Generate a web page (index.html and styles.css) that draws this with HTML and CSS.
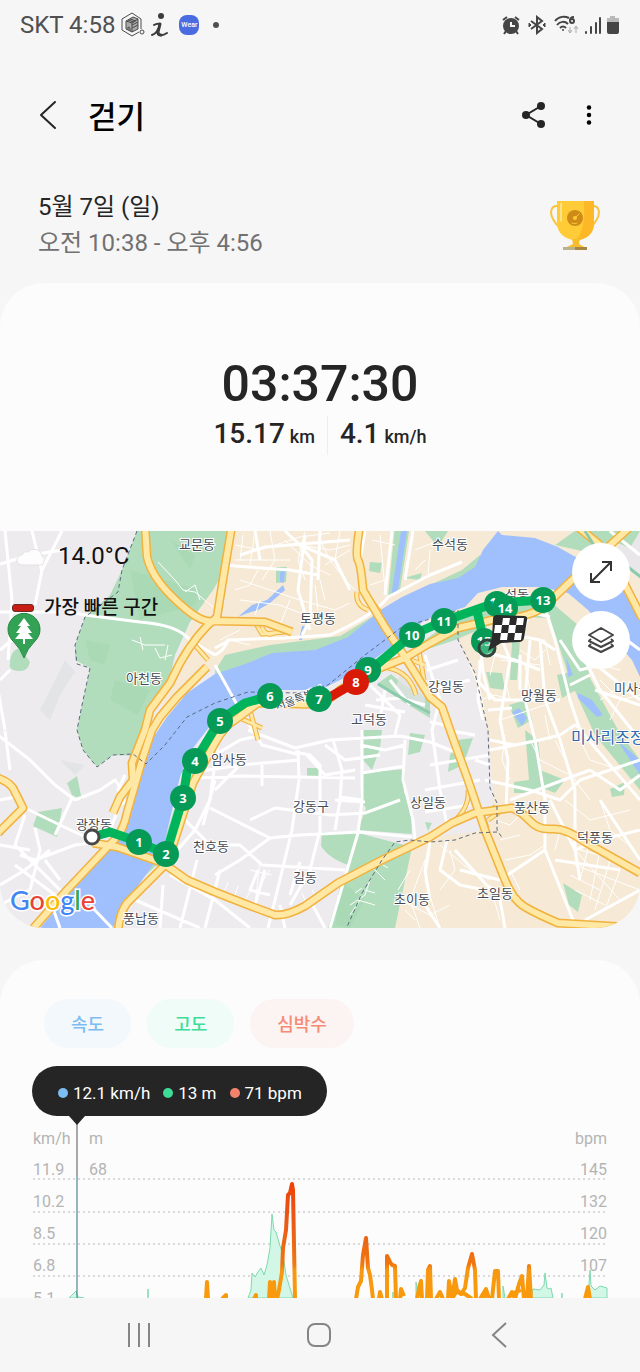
FILE: index.html
```html
<!DOCTYPE html>
<html lang="ko">
<head>
  <meta charset="UTF-8">
  <meta name="viewport" content="width=device-width, initial-scale=1">
  <title>걷기</title>
  <link rel="stylesheet" href="styles.css">
</head>
<body>
  <div class="status-bar">
    <div class="status-left">
      <span class="carrier">SKT 4:58</span>
      <svg width="24" height="26" viewBox="0 0 24 26" fill="none" stroke="#4a4a4a" stroke-width="1">
        <path d="M20 17V7L11 1 1 7v11l10 6 7-4"/>
        <path d="M5 9l7-4 5 2v10l-6 3-6-3z" fill="#aaa"/>
        <path d="M5 9l6 2v9M11 11l6-4M7 8l6 2M9 7l6 2M11 13l6-3M11 16l6-3M7 18v-3l2 1v3"/>
        <circle cx="21" cy="20" r="2"/>
      </svg>
      <svg width="18" height="26" viewBox="0 0 18 26" fill="none" stroke="#3c3c3c" stroke-linecap="round" stroke-linejoin="round">
        <path d="M3 13q3-2 6-1L7 19c-1 4 3 6 9 2M7 17c-1 3-3 5-6 6" stroke-width="2"/>
        <path d="M9 12L7 20q0 3 3 3" stroke-width="3"/>
        <circle cx="10" cy="4" r="3" fill="#3c3c3c" stroke="none"/>
      </svg>
      <span class="wear">Wear</span>
      <span class="dot"></span>
    </div>
    <div class="status-right">
      <svg width="18" height="20" viewBox="0 0 18 20">
        <circle cx="9" cy="11" r="8" fill="#454545"/>
        <path d="M1 5l4-3M17 5l-4-3M4 16l-2 3M14 16l2 3" stroke="#454545" stroke-width="2"/>
        <path d="M9 7v4h4" stroke="#f6f6f6" stroke-width="2" fill="none"/>
      </svg>
      <svg width="18" height="20" viewBox="0 0 18 20" fill="none" stroke="#454545" stroke-width="2">
        <path d="M3 6l11 8-5 4V2l5 4-11 8"/>
        <path d="M1 8l2 2-2 2zM17 8l-2 2 2 2z" fill="#454545" stroke-width="1"/>
      </svg>
      <svg width="26" height="20" viewBox="0 0 26 20" fill="none" stroke="#454545" stroke-width="2">
        <path d="M1 6c4-5 10-5 14-3M3 10c3-4 8-4 11-1M6 13c2-2 4-2 6 0"/>
        <circle cx="9" cy="15" r="1" fill="#454545" stroke="none"/>
        <path d="M20 2c-3 0-4 2-4 4"/><circle cx="18" cy="6" r="2"/>
        <path d="M16 12v6M14 15l2 3 2-3M22 18v-6M20 14l2-3 2 3" stroke="#aaa" stroke-width="1"/>
      </svg>
      <svg width="18" height="20" viewBox="0 0 18 20" fill="none" stroke="#454545" stroke-width="2" stroke-linecap="round">
        <path d="M2 17v1M7 12v6M12 8v10M16 3v15"/>
      </svg>
      <svg width="14" height="20" viewBox="0 0 14 20">
        <path d="M4 1h5v2h4v5H1V3h3z" fill="#b9b9b9"/>
        <path d="M1 7h12v10q0 2-2 2H3q-2 0-2-2z" fill="#454545"/>
      </svg>
    </div>
  </div>

  <header class="app-bar">
    <button class="icon-btn" aria-label="뒤로">
      <svg width="18" height="30" viewBox="0 0 18 30" fill="none" stroke="#252525" stroke-width="2" stroke-linecap="round" stroke-linejoin="round"><path d="M16 2L2 15l14 13"/></svg>
    </button>
    <h1>걷기</h1>
    <button class="icon-btn share" aria-label="공유">
      <svg width="24" height="28" viewBox="0 0 24 28" fill="#252525"><path d="M19 5L4 14l15 9" fill="none" stroke="#252525" stroke-width="2"/><circle cx="19" cy="5" r="4"/><circle cx="4" cy="14" r="4"/><circle cx="19" cy="23" r="4"/></svg>
    </button>
    <button class="icon-btn" aria-label="더보기">
      <svg width="6" height="26" viewBox="0 0 8 30"><circle cx="4" cy="5" r="3"/><circle cx="4" cy="15" r="3"/><circle cx="4" cy="25" r="3"/></svg>
    </button>
  </header>

  <section class="session">
    <div>
      <p class="date">5월 7일 (일)</p>
      <p class="period">오전 10:38 - 오후 4:56</p>
    </div>
    <svg width="50" height="52" viewBox="0 0 50 52">
      <path d="M8 7C0 6 0 15 3 20s5 9 10 8M42 7c8-1 8 8 5 13s-5 9-10 8" fill="none" stroke="#fbc33c" stroke-width="2"/>
      <path d="M7 2h37v22c0 10-7 17-18 17S7 34 7 24z" fill="#ffcb37"/>
      <path d="M34 2h10v22c0 10-7 17-18 17 7-7 9-20 8-39z" fill="#fdb827"/>
      <path d="M10 4h2v19l-2-1z" fill="#ffe28a"/>
      <path d="M22 40h8l-1 5 7 4H15l8-4z" fill="#f8bd2d"/>
      <path d="M13 48h12v3H13z" fill="#b9b28b"/><path d="M25 48h12v3H25z" fill="#a78643"/>
      <circle cx="25" cy="19" r="8" fill="#cf8b18"/>
      <path d="M25 19l4-4M22 24c2 1 4 1 5 0" stroke="#ffcb37" stroke-width="1" stroke-linecap="round" fill="none"/>
      <circle cx="25" cy="19" r="2" fill="#ffcb37"/>
    </svg>
  </section>

  <main>
    <section class="summary">
      <p class="duration">03:37:30</p>
      <div class="totals">
        <p>15.17 <small>km</small></p>
        <p>4.1 <small>km/h</small></p>
      </div>
    </section>

    <section class="map">
      <svg class="map-canvas" viewBox="0 531 640 397" role="img" aria-label="이동 경로">
        <defs>
          <g id="highways">
            <path d="M145 525L147 557Q150 570 160 583T187 610 215 621L265 622 292 632"/>
            <path d="M232 525L225 567 217 617Q197 633 180 663L170 683 150 710 145 730 132 763 133 780 120 797 113 813"/>
            <path d="M207 667L177 697 160 717 152 730 143 757 127 813Q124 828 117 837L67 890 30 932"/>
            <path d="M118 932Q119 914 127 903L167 863 178 830 193 783 215 743Q225 725 235 720L258 703 300 704Q325 706 340 690L375 670 405 658 430 643 458 628 492 620Q530 618 545 606L572 580 630 527"/>
            <path d="M360 525Q355 555 358 560T363 590L385 627 405 657 430 697 442 707 450 730 468 780 485 830 505 880Q513 900 525 907T558 923L625 927"/>
            <path d="M93 843L117 847 163 863 187 880 215 892 248 905 275 915Q287 916 305 906L338 883 382 860 430 837 452 823 475 813 512 808Q522 812 530 821T552 829 585 842L640 873"/>
            <path d="M-2 778Q12 783 15 792L23 808-2 833"/>
            <path d="M578 527L600 545M620 575L642 618"/>
          </g>
          <g id="ramps">
            <path d="M357 592Q355 605 368 610M380 612L362 590M255 622L262 634 285 632M262 628Q268 638 275 632"/>
            <path d="M240 718L262 728M250 710L258 740M405 658L425 665M388 668Q410 672 416 695"/>
            <path d="M452 823Q470 808 468 790M475 813Q492 812 496 806M487 828Q483 814 476 806M505 808L488 820"/>
            <path d="M418 645L424 680M210 625L193 643 208 660"/>
          </g>
        </defs>
        <rect y="531" width="640" height="397" fill="#eeebef"/>
        <!-- town areas -->
        <path d="M232 531H640V928H395L412 840 488 830 494 800 488 730 470 665 458 640 400 600 340 650 207 670 150 740 170 680 190 625 215 585z" fill="#f6e9d5"/>
        <path d="M625 531H640V580L615 555z" fill="#e9e7ea"/>
        <!-- parks and hills -->
        <g fill="#b2ddbc">
          <path d="M137 531H232L225 570 213 590 190 622 175 655 167 690 145 725 141 756 113 755 97 767 83 750 77 730 82 705 90 668 75 660 75 645 85 617 110 595 122 570z"/>
          <path d="M10 664Q10 650 20 648L30 662Q28 672 18 671T10 664zM67 783L77 776 82 800 72 795zM38 812L62 808 60 820 57 837 33 826z"/>
          <path d="M215 671L225 655 270 645 340 636 400 600 430 585 462 570 480 555 482 565 458 590 345 648 215 684z"/>
          <path d="M395 525H410L400 590 388 597zM425 531H448L438 547zM370 562L382 563 380 573 369 571zM404 578L422 573 420 580zM276 567L287 567 286 582 276 583z"/>
          <path d="M555 545L575 531 640 531 630 548 610 540 600 555zM458 616L545 597 578 625 590 678 618 730 640 760V790L595 735 570 680 550 618 520 617 490 625 455 640 425 650 418 645z"/>
          <path d="M307 768H320V777H307zM363 730H382L380 748 372 770 363 760zM410 733L425 735 420 752 408 755zM362 773L405 769 404 793 410 800 412 834 358 830 366 808 360 800z"/>
          <path d="M322 832H358L352 866Q330 860 321 846zM358 833L412 847 395 928H328z"/>
          <path d="M457 740L473 738 463 765 448 772 450 755zM486 672L502 673 505 690 490 688zM509 705L526 700 532 720 518 728zM525 730L538 740 543 785 532 793 514 793 514 782 529 780zM610 789L625 782 624 795 612 797zM563 883L582 895 578 912 569 905zM540 770L565 780 555 793 540 787z"/>
          <path d="M391 674L404 685 430 700 430 718 400 700 377 684zM425 822L432 823 428 831zM512 641L520 640 517 680 510 680zM557 675L570 672 576 690 562 698zM150 850L160 862 135 885z"/>
          <path d="M180 790L190 770 176 840 163 845z"/>
        </g>
        <g fill="#a5d8b1" opacity=".6">
          <path d="M130 570L200 590 195 605 140 620zM85 640L110 645 105 665 90 660zM115 680L150 690 138 715 110 700zM340 880L365 900 350 928 335 925zM170 540L195 555 190 570z"/>
        </g>
        <g fill="#dfe2e3" opacity=".8">
          <path d="M65 660L75 672 60 695 50 720 40 710zM400 675L425 690 425 710 395 690zM60 760L85 765 75 775z"/>
        </g>
        <!-- river -->
        <g fill="#9fc0fd">
          <path d="M640 607L628 590 600 568 572 555 558 547 535 538 502 535 498 531 483 550 475 567 458 578 430 584 402 597 382 609 348 637 315 650 272 653 248 663 215 674 187 693 167 717 155 735 147 753 140 773 130 807 124 835 107 853 80 880 40 928H113L123 907 150 869 158 858 165 840 180 777 190 752 213 722 240 703 270 690 320 690 360 670 400 640 425 620 465 607 478 593 502 587 542 587 568 593 588 610 632 660 640 677z"/>
          <path d="M401 531H407L398 590 391 597zM238 617L252 605 267 600 283 585 285 590 270 603 258 610 245 614zM302 626L305 626 302 640 299 640zM566 657L573 675 568 677zM578 693L592 700 603 715 597 717 578 698zM617 740L640 760V775zM280 572L285 570 284 583 280 582zM512 712L519 708 527 718 522 726z"/>
        </g>
        <!-- local streets -->
        <g class="street thin">
          <path d="M158 562L175 580 183 590 195 592 213 607M185 592L195 585 200 600M132 640L145 645 165 645M140 637L143 650M155 648L160 658 172 655M165 660L168 645"/>
          <path d="M235 545L260 550 300 537 330 533M240 580L270 590 300 600 335 610 350 603M305 532L298 560 305 580M320 540L330 560 345 580 355 590M260 600L255 615M240 600L280 605 330 625M270 531L275 560 262 580M285 540L310 565 330 575M235 560L290 560M325 565L350 550M235 590L250 585 258 570M300 545L330 550 350 545M340 531L335 560M315 585L318 610"/>
          <path d="M243 535L240 560M255 531L250 565M320 580L325 600M230 640L250 645M220 640L240 630M290 600L280 625M425 560L415 570M380 535L385 590M372 540L395 545M385 580L370 585M415 550L440 540M430 550L428 575"/>
          <path d="M470 665L480 690 485 715M480 700L495 695 515 701M490 675L495 655M505 680L510 700M535 640L545 640 550 665M520 650L535 660 545 650M500 660L540 665M525 665L530 690M500 720L560 700M545 715L550 740M600 680L620 700 640 695M615 690L600 700M630 680L610 720M600 665L620 670"/>
          <path d="M505 735L502 760 510 780M530 740L540 760 570 775M580 740L590 760 620 770M555 740L575 780 590 800M565 800L590 820 630 810M600 800L610 830 635 850M575 850L620 900M590 840L580 880M600 850L590 900M575 865L640 890M580 850L620 860M610 860L595 910M620 870L605 910M570 875L600 890M575 890L605 905M560 830L555 850"/>
          <path d="M430 850L425 880 440 928M440 845L470 870 490 880M425 860L410 900 420 928M400 900L430 915 450 905M490 885L500 920M505 860L530 855 545 845M510 870L520 890M500 840L520 835M398 890L410 870M415 920L405 910M450 850L455 870 440 890M495 820L510 825 520 815"/>
          <path d="M350 905L365 895 370 880M358 900L375 905M355 893L362 888M370 865L385 880M378 862L388 868M365 890L375 893M350 915L360 900"/>
          <path d="M225 890L228 882M235 895L238 886M245 900L250 892M305 900L302 893M315 896L312 890M260 860L255 905M270 870L260 885M250 870L272 875"/>
        </g>
        <g class="street">
          <path d="M5 531L12 600 8 660M0 564L30 555 63 550M62 531L42 570 35 605M32 531L42 572M0 612L60 612M70 612L85 615 140 622Q178 625 190 640L215 655M0 650L12 640 15 625M-2 690L5 730M-2 735L30 760 55 785 75 800M5 731L10 770M75 800L100 790 115 780 122 790M125 775L118 790 130 795M25 808L60 825 92 840M55 835L72 798M25 815L15 845 60 890M20 855L35 860 75 845 92 843M35 828L40 850 30 890M0 845L30 850M15 865L55 895M0 885L25 870 50 850M0 905L30 890M45 860L60 880M50 900L60 928M90 905L112 928M110 830L120 805 128 800M0 800L15 797M0 680L10 670"/>
          <path d="M215 655Q225 650 228 640L285 638 330 635Q375 615 388 597M215 648L230 640M388 597L430 575 462 562M300 545L312 560 310 620M305 535L298 590 310 630M320 531L318 580M228 565L235 566 290 570 318 575M255 531L260 560M240 555L265 547 350 540M392 531L385 595M413 531L405 580M365 531L360 560M310 620L302 635M285 531L300 545 335 560 350 590"/>
          <path d="M215 665L240 710 262 745 300 755M195 778L240 776 355 778M248 730L295 748 330 740 400 736 430 742 455 752M298 750L299 780 292 830 275 900 268 928M295 752L310 755 320 765 320 830 310 870 290 905M333 740L342 770 340 800 335 830M362 730L362 800 358 833 330 928M405 740L403 780 413 820 415 840M362 773L405 766M190 773L240 765 300 760M215 755L240 740 262 735M262 765L262 786M215 762L210 800 195 830 173 855M210 808L270 838 300 835 360 832 412 837M270 838L240 860 215 875M215 845L240 845 262 865 345 870M185 820L215 850M265 870L255 905M215 790L240 765M250 820L275 808 330 815 365 813 400 800M340 797L362 800M307 755L325 775 355 770M325 745L345 760 380 755M212 730L220 760M195 840L215 845M197 860L180 928M220 870L205 928M170 875L215 900 250 928M135 900L200 928M163 885L160 928M280 905L285 928M310 900L325 928M360 745L385 750 405 745M300 862L290 895M258 870L250 890 270 895"/>
          <path d="M376 700L400 698 425 705M385 690L380 720M370 685L400 715 395 735M365 705L405 712M390 680L410 705M215 780L203 825M335 800L365 802"/>
          <path d="M545 608L555 640 570 700 580 730 640 800M550 617L530 612 520 640M500 635L510 660 500 720 508 760 506 810M478 650L515 660 540 670M477 680L495 700 560 700M515 635L540 640 555 650M530 640L525 700 535 740 545 800M540 640L545 700 560 740 575 790M570 685L590 675M580 650L600 690 640 740M480 660L478 700 483 720M560 735L575 725 580 728M490 750L540 740 560 735M485 780L530 790 560 800 580 780 640 760M510 800L590 770M545 795L545 850 575 925M550 800L575 850 580 880M575 850L600 840 640 830M600 800L640 860M575 790L575 850M590 770L620 790 640 775M490 740L515 745M490 700L483 672 478 620M520 655L520 690M555 860L620 870M585 920L640 890M488 710L512 708"/>
          <path d="M425 655L440 700 432 730 440 790 448 830M425 690L470 680M430 765L490 755M425 790L480 780M445 730L475 735M427 670L458 660M430 722L445 725M425 812L470 805M430 842L425 870 430 900M447 840L440 870 460 885 485 890M455 850L500 900 505 928M425 905L440 928M475 760L490 765"/>
          <path d="M545 850L500 880 460 870M610 531L640 555M600 620L640 650M590 660L640 700M560 640L580 670 600 665M595 690L640 705"/>
        </g>
        <use href="#ramps" class="ramp-case"/>
        <use href="#ramps" class="ramp-fill"/>
        <use href="#highways" class="road-case"/>
        <use href="#highways" class="road-fill"/>
        <path d="M585 531L600 555M628 567L642 578M378 684L405 700 430 713" fill="none" stroke="#8ccaae" stroke-width="3"/>
        <!-- district borders -->
        <g fill="none" stroke="#5d6a80" stroke-dasharray="4 3">
          <path d="M137 531L122 570 118 592 85 617 75 645 77 664 90 668 82 705 77 730 83 750 97 767 113 755 133 754 146 764 165 745 187 717 215 703 248 692 298 693 328 685 365 655 402 627 430 619 458 610V640L475 673 488 730 490 788 497 803V830L503 839M497 832L475 833 455 840 430 842 410 840 395 842 382 860 362 893 347 927"/>
        </g>
        <g class="place">
          <text x="197" y="549">교문동</text>
          <text x="450" y="549">수석동</text>
          <text x="318" y="623">토평동</text>
          <text x="144" y="683">아천동</text>
          <text x="229" y="764">암사동</text>
          <text x="369" y="724">고덕동</text>
          <text x="446" y="691">강일동</text>
          <text x="539" y="700">망월동</text>
          <text x="311" y="811">강동구</text>
          <text x="428" y="807">상일동</text>
          <text x="532" y="812">풍산동</text>
          <text x="595" y="842">덕풍동</text>
          <text x="211" y="851">천호동</text>
          <text x="94" y="829">광장동</text>
          <text x="305" y="882">길동</text>
          <text x="412" y="904">초이동</text>
          <text x="495" y="898">초일동</text>
          <text x="141" y="923">풍납동</text>
          <text x="517" y="599">석동</text>
          <text x="614" y="693" class="from-left">미사동</text>
          <text x="571" y="743" class="from-left landmark">미사리조정</text>
          <text x="299" y="702" class="city" transform="rotate(-20 299 697)">서울특별시</text>
        </g>
        <!-- walked route -->
        <g fill="none" stroke="#00b45c" stroke-width="9" stroke-linejoin="round">
          <path d="M92 837L110 832 139 842 166 854 183 798 187 772 195 761 220 720 245 703 270 696"/>
          <path d="M356 682L412 635 444 621 495 603 543 600M477 611L484 641"/>
          <path d="M319 700L330 697 356 682" stroke="#d91a06"/>
        </g>
        <circle cx="92" cy="837" r="7" fill="#fff" stroke="#484848" stroke-width="3"/>
        <g class="marker">
          <circle cx="139" cy="842" r="13"/><text x="139" y="847">1</text>
          <circle cx="166" cy="854" r="13"/><text x="166" y="859">2</text>
          <circle cx="183" cy="798" r="13"/><text x="183" y="803">3</text>
          <circle cx="195" cy="761" r="13"/><text x="195" y="766">4</text>
          <circle cx="220" cy="721" r="13"/><text x="220" y="726">5</text>
          <circle cx="270" cy="696" r="13"/><text x="270" y="701">6</text>
          <circle cx="319" cy="699" r="13"/><text x="319" y="704">7</text>
          <circle cx="368" cy="670" r="13"/><text x="368" y="675">9</text>
          <circle cx="356" cy="682" r="13" class="fastest"/><text x="356" y="687">8</text>
          <circle cx="412" cy="635" r="13"/><text x="412" y="640">10</text>
          <circle cx="444" cy="621" r="13"/><text x="444" y="626">11</text>
          <circle cx="497" cy="604" r="13"/><text x="497" y="607">12</text>
          <circle cx="484" cy="641" r="13"/><text x="484" y="646">15</text>
          <circle cx="505" cy="608" r="13"/><text x="505" y="613">14</text>
          <circle cx="543" cy="600" r="13"/><text x="543" y="605">13</text>
        </g>
        <circle cx="487" cy="648" r="8" fill="#74c9a0" fill-opacity=".5" stroke="#30463c" stroke-width="3"/>
        <!-- finish flag -->
        <path d="M497 615l27 1q4 0 3 4l-3 18q-1 4-5 4l-18 1-13 8 4-13 1-19q0-4 4-4z" fill="#2b2b2b"/>
        <path d="M503 618h7l-1 7h-7zM517 618h7l-1 7h-7zM495 625h7l-1 8h-7zM509 625h7l-1 8h-7zM501 633h7l-1 7h-7zM515 633h7l-1 7h-7z" fill="#fff"/>
        <!-- park pin -->
        <path d="M24 658Q21 649 13 641a16 16 0 1 1 22 0Q27 649 24 658z" fill="#34a254" stroke="#258642"/>
        <path d="M24 618l6 8h-3l5 7h-4l5 6h-8v5h-2v-5h-8l5-6h-4l5-7h-3z" fill="#fff"/>
        <text x="10" y="910" class="google"><tspan fill="#4285f4">G</tspan><tspan fill="#ea4335">o</tspan><tspan fill="#fbbc05">o</tspan><tspan fill="#4285f4">g</tspan><tspan fill="#34a853">l</tspan><tspan fill="#ea4335">e</tspan></text>
      </svg>
      <div class="map-info">
        <div class="weather">
          <svg width="28" height="20" viewBox="0 0 28 20"><path d="M6 19a5 5 0 0 1 0-10 5 5 0 0 1 6-3 8 8 0 0 1 14 4 5 5 0 0 1-4 9z" fill="#fdfdfd" stroke="#e4e1e1"/></svg>
          <span>14.0°C</span>
        </div>
        <div class="fast-legend"><i></i><span>가장 빠른 구간</span></div>
      </div>
      <div class="map-tools">
        <button aria-label="지도 확대">
          <svg width="26" height="26" viewBox="0 0 26 26" fill="none" stroke="#333" stroke-width="2"><path d="M3 23L23 3M14 3h9v9M3 14v9h9"/></svg>
        </button>
        <button aria-label="지도 종류">
          <svg width="28" height="28" viewBox="0 0 28 28" fill="none" stroke="#444" stroke-width="2" stroke-linejoin="round"><path d="M14 2l12 7-12 7L2 9zM4 13l-2 2 12 6 12-6-2-2M4 18l-2 2 12 6 12-6-2-2"/></svg>
        </button>
      </div>
    </section>

    <section class="chart-card">
      <div class="chips">
        <button class="chip speed">속도</button>
        <button class="chip altitude">고도</button>
        <button class="chip heart">심박수</button>
      </div>
      <div class="reading">
        <span class="speed">12.1 km/h</span>
        <span class="altitude">13 m</span>
        <span class="heart">71 bpm</span>
      </div>
      <svg class="chart" viewBox="0 1116 640 182" role="img" aria-label="속도, 고도, 심박수 그래프">
        <defs>
          <linearGradient id="pulse" gradientUnits="userSpaceOnUse" x1="0" y1="1184" x2="0" y2="1298">
            <stop offset="0" stop-color="#ef4308"/>
            <stop offset=".35" stop-color="#e95b18"/>
            <stop offset=".7" stop-color="#f0760f"/>
            <stop offset=".76" stop-color="#f79812"/>
            <stop offset="1" stop-color="#f99a0b"/>
          </linearGradient>
        </defs>
        <g class="grid-lines">
          <path d="M33 1179H608M33 1212H608M33 1244H608M33 1276H608"/>
        </g>
        <g class="axis">
          <text x="33" y="1144">km/h</text>
          <text x="33" y="1175">11.9</text>
          <text x="33" y="1207">10.2</text>
          <text x="33" y="1239">8.5</text>
          <text x="33" y="1271">6.8</text>
          <text x="33" y="1304">5.1</text>
          <text x="89" y="1144">m</text>
          <text x="89" y="1175">68</text>
        </g>
        <g class="axis right">
          <text x="607" y="1144">bpm</text>
          <text x="607" y="1175">145</text>
          <text x="607" y="1207">132</text>
          <text x="607" y="1239">120</text>
          <text x="607" y="1271">107</text>
          <text x="607" y="1304">94</text>
        </g>
        <path class="altitude-area" d="M69 1298L73 1294 76 1291 78 1297 84 1298zM148 1298V1289V1298zM248 1298L251 1290 252 1273 255 1277 258 1272 261 1268 264 1275 267 1265 270 1248 272 1214 274 1230 276 1232 280 1246 283 1255 286 1275 293 1298zM393 1298V1292V1298zM416 1298V1282L419 1298zM503 1298V1286L505 1298zM531 1298L533 1289 540 1290 544 1285 545 1273 547 1288 549 1289 551 1288 553 1298zM562 1298V1293V1298zM588 1298L590 1270 591 1286 595 1290 600 1286 607 1288V1298z"/>
        <g class="pulse-line">
          <path d="M206 1299L207 1282 208 1299M222 1299L226 1295V1299M254 1299L256 1295V1299M269 1299L270 1282 272 1299 274 1282 275 1299M277 1299L279 1290 282 1272 283 1248 286 1230 288 1195 290 1193 292 1184 293 1190 295 1299"/>
          <path d="M356 1299L358 1287 361 1281 363 1255 366 1238 368 1268 370 1275 372 1290 373 1299M379 1299L380 1292 382 1299M387 1299V1256L390 1262 392 1265 395 1266 396 1299M400 1299L401 1289 404 1296M417 1299L419 1288 421 1281 422 1299M427 1299L428 1270 430 1266 431 1299M436 1299L440 1292 443 1299M448 1299L449 1281 452 1299 455 1279 457 1290 461 1294 465 1288 468 1268 472 1254 475 1270 476 1299M480 1299L486 1289 489 1299M492 1299L495 1271H498L499 1299M508 1299L512 1292 515 1299 519 1284 522 1276 524 1299M527 1299L529 1266 531 1299M585 1299L588 1287 590 1299"/>
          <path d="M452 1299L456 1292 465 1294 472 1299M482 1299L488 1293M510 1296L516 1292 521 1290M419 1296L421 1286"/>
        </g>
        <path d="M77 1116V1176" stroke="#555"/><path d="M77 1176V1298" stroke="#287286"/>
      </svg>
    </section>
  </main>

  <nav class="system-nav">
    <button aria-label="최근 앱"><svg width="24" height="26" viewBox="0 0 24 26" stroke="#858585" stroke-width="2"><path d="M2 1v24M12 1v24M22 1v24"/></svg></button>
    <button aria-label="홈"><svg width="26" height="26" viewBox="0 0 26 26" fill="none" stroke="#858585" stroke-width="2"><rect x="2" y="2" width="22" height="22" rx="7"/></svg></button>
    <button aria-label="이전"><svg width="16" height="26" viewBox="0 0 16 26" fill="none" stroke="#858585" stroke-width="2"><path d="M15 1L2 13l13 12"/></svg></button>
  </nav>
</body>
</html>
```
FILE: styles.css
```css
* {
  box-sizing: border-box;
}
body {
  margin: 0;
  background: #f6f6f6;
  color: #252525;
  font-family: Roboto, "Noto Sans CJK KR", sans-serif;
}
p, h1 {
  margin: 0;
}
svg {
  display: block;
}
button {
  font: inherit;
  border: 0;
  padding: 0;
  background: none;
  cursor: pointer;
}

/* status bar */
.status-bar {
  display: flex;
  justify-content: space-between;
  align-items: center;
  height: 50px;
  padding: 0 20px;
}
.status-left, .status-right {
  display: flex;
  align-items: center;
  gap: 8px;
}
.status-left {
  gap: 6px;
}
.carrier {
  font-size: 24px;
  color: #505050;
}
.wear {
  width: 20px;
  height: 20px;
  margin: 0 8px 0 4px;
  border-radius: 8px;
  background: #4b6be0;
  color: #fff;
  font-size: 7px;
  font-weight: 500;
  line-height: 20px;
  text-align: center;
}
.dot {
  width: 6px;
  height: 6px;
  border-radius: 50%;
  background: #505050;
}
.status-right {
  gap: 7px;
}
.status-right svg + svg {
  margin-left: 1px;
}
.status-right svg:nth-child(n+4) {
  margin-left: -3px;
}

/* title bar */
.app-bar {
  display: flex;
  align-items: center;
  height: 129px;
  padding: 0 44px 0 32px;
}
.icon-btn {
  display: flex;
  justify-content: center;
  align-items: center;
  width: 32px;
  height: 48px;
}
.app-bar h1 {
  margin-left: 24px;
  font-size: 31px;
  font-weight: 500;
  color: #000;
}
.app-bar .share {
  margin-left: auto;
  margin-right: 32px;
}
.app-bar .icon-btn:last-child {
  width: 14px;
}
.session {
  display: flex;
  justify-content: space-between;
  align-items: center;
  padding: 10px 40px 22px 38px;
  line-height: 36px;
  font-size: 24px;
}
.session .period {
  color: #717171;
}

/* totals */
.summary {
  height: 248px;
  padding-top: 69px;
  border-radius: 44px 44px 0 0;
  background: #fcfcfc;
  text-align: center;
  font-weight: 500;
}
.duration {
  font-size: 50px;
  line-height: 64px;
}
.totals {
  display: flex;
  justify-content: center;
  align-items: center;
  font-size: 28px;
  line-height: 36px;
}
.totals p + p {
  margin-left: 12px;
  padding-left: 12px;
  border-left: 1px solid #eee;
}
.totals small {
  margin-left: -2px;
  font-size: 18px;
}

/* map */
.map {
  position: relative;
  overflow: hidden;
  border-radius: 0 0 44px 44px;
}
.map-canvas {
  width: 100%;
}
.street {
  fill: none;
  stroke: #fff;
  stroke-width: 3;
  stroke-linejoin: round;
}
.street.thin {
  stroke-width: 1;
}
.road-case, .road-fill, .ramp-case, .ramp-fill {
  fill: none;
  stroke-linejoin: round;
}
.road-case {
  stroke: #f1b23e;
  stroke-width: 9;
}
.road-fill {
  stroke: #ffe7a4;
  stroke-width: 6;
}
.ramp-case {
  stroke: #f1b23e;
  stroke-width: 5;
}
.ramp-fill {
  stroke: #ffe7a4;
  stroke-width: 3;
}
.place {
  font-family: "Noto Sans CJK KR", sans-serif;
  font-size: 13px;
  fill: #444a52;
  stroke: #fff;
  stroke-width: 2px;
  paint-order: stroke;
  text-anchor: middle;
}
.place .from-left {
  text-anchor: start;
}
.place .landmark {
  font-size: 16px;
  fill: #2f66ad;
}
.place .city {
  font-size: 11px;
}
.marker {
  font-family: "Noto Sans", sans-serif;
  font-size: 13px;
  font-weight: 700;
  text-anchor: middle;
  fill: #059b57;
}
.marker text {
  fill: #fff;
}
.marker .fastest {
  fill: #d91a06;
}
.google {
  font-family: Lato, sans-serif;
  font-size: 27px;
  font-weight: 500;
  stroke: #fff;
  stroke-width: 3px;
  paint-order: stroke;
}
.map-info {
  position: absolute;
  top: 8px;
  left: 12px;
  color: #111;
}
.weather, .fast-legend {
  display: flex;
  align-items: center;
}
.weather {
  gap: 14px;
  padding-left: 4px;
  font-size: 24px;
  line-height: 34px;
}
.fast-legend {
  gap: 10px;
  margin-top: 21px;
  font-size: 19px;
  font-weight: 500;
  line-height: 28px;
}
.fast-legend i {
  width: 22px;
  height: 8px;
  border: 1px solid #6b2b27;
  border-radius: 3px;
  background: #c81d12;
}
.map-tools {
  position: absolute;
  top: 12px;
  right: 10px;
  display: grid;
  gap: 10px;
}
.map-tools button {
  display: grid;
  place-items: center;
  width: 58px;
  height: 58px;
  border-radius: 50%;
  background: #fff;
}

/* chart */
.chart-card {
  margin-top: 32px;
  padding-top: 39px;
  border-radius: 44px 44px 0 0;
  background: #fcfcfc;
}
.chips {
  display: flex;
  gap: 16px;
  padding-left: 44px;
}
.chip {
  height: 49px;
  padding: 0 27px 2px;
  border-radius: 25px;
  font-size: 18px;
  font-weight: 500;
}
.chip.speed {
  background: #f3f8fd;
  color: #7dbcf2;
}
.chip.altitude {
  background: #effcf7;
  color: #3ddc97;
}
.chip.heart {
  background: #fcf3f3;
  color: #f58b74;
}
.reading {
  position: relative;
  display: flex;
  align-items: center;
  gap: 13px;
  width: max-content;
  height: 50px;
  margin: 18px 0 0 32px;
  padding: 4px 25px 0 26px;
  border-radius: 25px;
  background: #252525;
  color: #fff;
  font-size: 17px;
}
.reading::after {
  content: "";
  position: absolute;
  left: 37px;
  top: 100%;
  border: 8px solid transparent;
  border-top: 9px solid #252525;
  border-bottom: 0;
}
.reading span {
  display: flex;
  align-items: center;
  gap: 5px;
}
.reading span::before {
  content: "";
  width: 10px;
  height: 10px;
  border-radius: 50%;
  background: #7dbcf2;
}
.reading .altitude::before {
  background: #3ddc97;
}
.reading .heart::before {
  background: #f5836c;
}
.chart {
  width: 100%;
}
.grid-lines {
  stroke: #b9b9b9;
  stroke-width: 1;
  stroke-dasharray: 2 3;
}
.axis {
  font-size: 16px;
  fill: #b4b4b4;
}
.axis.right {
  text-anchor: end;
}
.altitude-area {
  fill: #d3f7e6;
  stroke: #7ed9af;
  stroke-width: 1;
}
.pulse-line {
  fill: none;
  stroke: url(#pulse);
  stroke-width: 4;
  stroke-linejoin: round;
}

/* android navigation */
.system-nav {
  display: grid;
  grid-template-columns: repeat(3, 1fr);
  height: 74px;
  padding: 0 51px 0 49px;
}
.system-nav button {
  display: grid;
  place-items: center;
}
```
